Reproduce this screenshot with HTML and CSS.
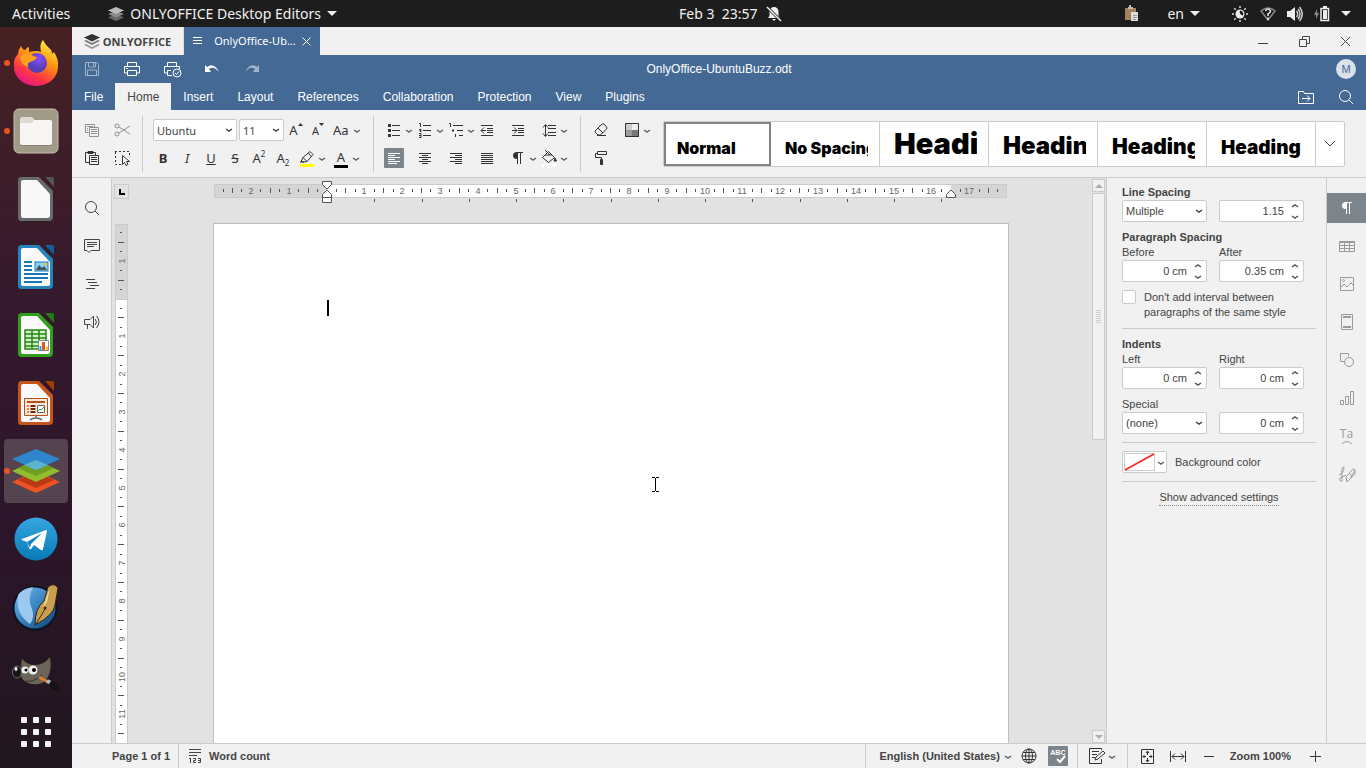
FILE: index.html
```html
<!DOCTYPE html>
<html lang="en">
<head>
    <meta charset="UTF-8">
    <title>OnlyOffice-UbuntuBuzz.odt</title>
    <link rel="stylesheet" href="styles.css">
</head>
<body>
    <!-- GNOME TOP BAR -->
    <header class="topbar">
        <div class="topbar-group menus">
            <span>Activities</span>
            <span class="app-menu">
                <svg width="16" height="16" viewBox="0 0 16 16"><path fill="#666" d="M8 8l8 3.500-8 3.500-8-3.500z"/><path fill="#8c8c8c" d="M8 5l8 3-8 3.500-8-3.500z"/><path fill="#bbb" d="M8 1l8 3.500-8 3.500-8-3.500z"/></svg>
                ONLYOFFICE Desktop Editors
                <svg width="10" height="6"><path fill="#eee" d="M0 0h10l-5 5z"/></svg>
            </span>
        </div>
        <div class="topbar-group clock">
            <span>Feb 3&nbsp; 23:57</span>
            <svg width="16" height="16" viewBox="0 0 16 16"><path fill="#eee" d="M8 1a4.500 4.500 0 0 0-4.500 4.500V10L2 12h12l-1.500-2V5.500A4.500 4.500 0 0 0 8 1zM6 13h4l-2 2z"/><path stroke="#1d1d1d" stroke-width="3" d="M1 1l14 14"/><path stroke="#eee" stroke-width="1.500" d="M1 1l14 14"/></svg>
        </div>
        <div class="topbar-group tray">
            <svg width="16" height="18" viewBox="0 0 16 18"><path fill="#a5815a" d="M1 3h11v12H1z"/><path fill="#bbb" d="M4 2h1V0h2v2h2v2H4z"/><path fill="#ddd" d="M7 7h7v9H7z"/><path stroke="#999" d="M9 10.500h4M9 12.500h4M9 14.500h3"/></svg>
            <span class="lang">en <svg width="10" height="6"><path fill="#eee" d="M0 0h10l-5 5z"/></svg></span>
            <svg width="18" height="18" viewBox="0 0 18 18"><circle cx="9" cy="9" r="4.500" fill="#eee"/><path fill="#1d1d1d" d="M9 5.500a3.500 3.500 0 0 1 3 5A3.500 3.500 0 0 1 9 5.500z"/><path stroke="#ddd" stroke-width="1.500" d="M9 1v2M9 15v2M1 9h2M15 9h2M3.300 3.300l1.400 1.400M13.300 13.300l1.400 1.400M3.300 14.700l1.400-1.400M13.300 4.700l1.400-1.400"/></svg>
            <svg width="16" height="16" viewBox="0 0 16 16"><path fill="none" stroke="#888" stroke-width="1.500" d="M8 14L1 5Q8-1 15 5z"/><path fill="none" stroke="#eee" stroke-width="1.500" d="M5.500 5Q6 3 8 3t2.500 2Q10.500 6.500 8 8v2M8 11.500V14"/></svg>
            <svg width="16" height="16" viewBox="0 0 16 16"><path fill="#eee" d="M0 5h3l5-4v14l-5-4H0z"/><path fill="none" stroke="#ccc" stroke-width="1.500" d="M9.500 5q2.500 3 0 6M11 3q4 5 0 10M12.500 1q5.500 7 0 14"/></svg>
            <svg width="16" height="18" viewBox="0 0 16 18"><path fill="#888" d="M3 4L0 10h2v4l3-6H3z"/><path fill="none" stroke="#eee" stroke-width="1.500" d="M7 3.500h7.500v12H7z"/><path fill="#eee" d="M9 1h4v2H9zM9 5h4v9H9z"/></svg>
            <svg width="10" height="6"><path fill="#eee" d="M0 0h10l-5 5z"/></svg>
        </div>
    </header>

    <div class="desktop">
        <!-- DOCK -->
        <nav class="dock">
            <button class="dock-item running" aria-label="Firefox">
                <svg width="46" height="46" viewBox="0 0 46 46">
                    <defs>
                        <linearGradient id="fx" x1=".8" y1="0" x2=".3" y2="1"><stop offset="0" stop-color="#fff44f"/><stop offset=".4" stop-color="#ff980e"/><stop offset=".75" stop-color="#ff3647"/><stop offset="1" stop-color="#e31587"/></linearGradient>
                        <radialGradient id="fxp" cx=".6" cy=".3"><stop offset="0" stop-color="#8a4dff"/><stop offset="1" stop-color="#5540b8"/></radialGradient>
                    </defs>
                    <path fill="url(#fx)" d="M30 0q3 6 7 9 2 1 2 5l2-2q5 8 4 15A22 19 0 0 1 1 27Q0 19 5 14q0-4 3-8 2 4 4 4 2-3 4-3v5q8-2 12 0-2-8 2-12z"/>
                    <circle cx="24" cy="23" r="10" fill="url(#fxp)"/>
                    <path fill="#ffa01c" d="M7 17q5-4 9-4 3 3 8 4-2 4-7 5-3 1-2 5-7-2-8-10z"/>
                </svg>
            </button>
            <button class="dock-item running" aria-label="Files">
                <svg width="46" height="46" viewBox="0 0 46 46"><rect x="1" y="1" width="44" height="44" rx="5" fill="#a19a88" stroke="#c5bfb0"/><rect x="7" y="12" width="32" height="25" rx="2" fill="#f7f6f5"/><path fill="#dedad2" d="M7 15V11q0-2 2-2h9q2 0 3 2v1l-2 3z"/><path stroke="#888171" d="M8 37.500h30"/></svg>
            </button>
            <button class="dock-item" aria-label="LibreOffice">
                <svg width="38" height="46" viewBox="0 0 38 46"><path fill="#666a68" d="M4 1h18l14 14v26q0 4-4 4H4q-3 0-3-4V5q0-4 3-4z"/><path fill="#f8f8f8" d="M6 4h14l13 14v22q0 2-2 2H6q-2 0-2-2V6q0-2 2-2z"/><path fill="#555" d="M28 1h7q2 0 2 2v8z"/></svg>
            </button>
            <button class="dock-item" aria-label="LibreOffice Writer">
                <svg width="38" height="46" viewBox="0 0 38 46"><path fill="#2583bd" d="M4 1h18l14 14v26q0 4-4 4H4q-3 0-3-4V5q0-4 3-4z"/><path fill="#fafafa" d="M6 4h14l13 14v22q0 2-2 2H6q-2 0-2-2V6q0-2 2-2z"/><path fill="#0d6299" d="M28 1h7q2 0 2 2v8z"/><path stroke="#1a78b5" stroke-width="2" d="M7 18h8M7 22h8M7 26h8M7 30h24M7 34h24M7 38h18"/><rect x="18" y="18" width="13" height="9" fill="#8ad0f3" stroke="#1a78b5"/><path fill="#475152" d="M19 26l3-5 3 3 2-2 3 4z"/><path fill="#f7c71f" d="M27 19h3v2h-3z"/></svg>
            </button>
            <button class="dock-item" aria-label="LibreOffice Calc">
                <svg width="38" height="46" viewBox="0 0 38 46"><path fill="#319e1d" d="M4 1h18l14 14v26q0 4-4 4H4q-3 0-3-4V5q0-4 3-4z"/><path fill="#fafafa" d="M6 4h14l13 14v22q0 2-2 2H6q-2 0-2-2V6q0-2 2-2z"/><path fill="#237a12" d="M28 1h7q2 0 2 2v8z"/><path fill="#d5f1cc" stroke="#238713" stroke-width="1.500" d="M8 18h21v19H8zM8 22h21M8 26h21M8 30h21M8 34h21M15 18v19M22 18v19"/><path fill="#fff" stroke="#888" d="M21.500 28.500h10v10h-10z"/><path stroke="#38a1dc" stroke-width="2" d="M23.500 38v-4"/><path stroke="#e35b17" stroke-width="3" d="M26.500 38v-8"/><path stroke="#f3bd22" stroke-width="2" d="M30 38v-3"/></svg>
            </button>
            <button class="dock-item" aria-label="LibreOffice Impress">
                <svg width="38" height="46" viewBox="0 0 38 46"><path fill="#c75419" d="M4 1h18l14 14v26q0 4-4 4H4q-3 0-3-4V5q0-4 3-4z"/><path fill="#fafafa" d="M6 4h14l13 14v22q0 2-2 2H6q-2 0-2-2V6q0-2 2-2z"/><path fill="#a33e03" d="M28 1h7q2 0 2 2v8z"/><path fill="#fae9dc" stroke="#bc4d13" d="M7.500 18.500h23v17h-23z"/><path stroke="#bc4d13" stroke-width="2" d="M10 22h18"/><path stroke="#e98443" stroke-width="2" stroke-dasharray="2 1" d="M11 25v9"/><path stroke="#702b0a" stroke-width="5" stroke-dasharray="2 1" d="M16 25v9"/><path fill="#fff" stroke="#666" d="M20.500 25.500h7v7h-7z"/><path fill="none" stroke="#23a335" d="M21 31l2-2 1 1 3-3"/><path fill="none" stroke="#666" stroke-width="1.500" d="M19 36v2M13 40q2-2 6-2t6 2"/></svg>
            </button>
            <button class="dock-item running active" aria-label="ONLYOFFICE">
                <svg width="48" height="46" viewBox="0 0 48 46"><path fill="#ed5323" d="M24 23l24 11-24 11L0 34z"/><path fill="#ba3916" d="M24 24l18 8-18 8-18-8z"/><path fill="#91bd2e" d="M24 12l24 11-24 11L0 23z"/><path fill="#6f9d20" d="M24 12l18 8-18 8-18-8z"/><path fill="#2f86cc" d="M24 1l24 10-24 11L0 11z"/><path fill="#5eb3d0" d="M24 12l12 5-12 5-12-5z"/></svg>
            </button>
            <button class="dock-item" aria-label="Telegram">
                <svg width="44" height="44" viewBox="0 0 44 44"><defs><linearGradient id="tg" x2="0" y2="1"><stop stop-color="#35a6df"/><stop offset="1" stop-color="#087bb7"/></linearGradient></defs><circle cx="22" cy="22" r="21.500" fill="url(#tg)"/><path fill="#fff" d="M8 22l24-9q1 0 1 1l-4 18q0 2-2 1l-7-5-3 4q-1 1-2-1l-2-6-5-2q-1 0 0-1z"/><path fill="#1584bf" d="M13 25l15-9-11 11-1 4z"/></svg>
            </button>
            <button class="dock-item" aria-label="Scribus">
                <svg width="48" height="48" viewBox="0 0 48 48"><defs><linearGradient id="sc" x2="1" y2="1"><stop stop-color="#76bdf0"/><stop offset=".5" stop-color="#3982c1"/><stop offset="1" stop-color="#073d70"/></linearGradient></defs><circle cx="23" cy="25" r="21.500" fill="url(#sc)" stroke="#0c1220" stroke-width="2"/><path fill="#9cc9ef" d="M6 12q5-7 15-8-6 12-1 22 3 9-2 15Q3 31 6 12z"/><path fill="#c89f50" stroke="#2f2310" d="M23 42q0-17 9-24l4-14q6-5 10 1l-3 17q-1 10-20 20z"/><path fill="#efd58e" d="M38 5l-3 14-4 6q2-9 7-20z"/><path stroke="#382914" d="M24 41l9-15"/><circle cx="33" cy="25" r="1.500" fill="#382914"/></svg>
            </button>
            <button class="dock-item" aria-label="GIMP">
                <svg width="48" height="44" viewBox="0 0 48 44"><path fill="#6b6559" d="M10 6q5 6 13 6 9 0 15-8 2 12-2 20-5 9-17 7Q8 28 9 20 9 11 10 6z"/><ellipse cx="5" cy="19" rx="4.500" ry="6" fill="#151515" stroke="#6b7274"/><ellipse cx="4" cy="16" rx="1.500" ry="2" fill="#eee"/><circle cx="13" cy="17" r="3.500" fill="#eee"/><circle cx="21" cy="17" r="4.500" fill="#eee"/><circle cx="14" cy="17" r="1.500"/><circle cx="22" cy="17" r="2"/><path fill="none" stroke="#33302c" d="M13 28q8 2 17-6"/><path stroke="#d98030" stroke-width="3" d="M27 24l9 5"/><path stroke="#b0b8bc" stroke-width="4" d="M35 28l4 2"/><path fill="#141414" d="M39 28q7 1 8 10-8 0-10-7z"/></svg>
            </button>
            <button class="dock-item apps" aria-label="Show Applications">
                <svg width="30" height="30" viewBox="0 0 30 30"><g fill="#f2f2f2"><rect width="6" height="6" rx="1"/><rect x="12" width="6" height="6" rx="1"/><rect x="24" width="6" height="6" rx="1"/><rect y="12" width="6" height="6" rx="1"/><rect x="12" y="12" width="6" height="6" rx="1"/><rect x="24" y="12" width="6" height="6" rx="1"/><rect y="24" width="6" height="6" rx="1"/><rect x="12" y="24" width="6" height="6" rx="1"/><rect x="24" y="24" width="6" height="6" rx="1"/></g></svg>
            </button>
        </nav>

        <main class="app">
            <!-- WINDOW TABS -->
            <div class="window-bar">
                <button class="home-tab">
                    <svg width="16" height="15" viewBox="0 0 16 15"><path fill="#333" d="M8 0l8 3.500L8 7.500 0 3.500z"/><path fill="#777" d="M0 7l2-1 6 3 6-3 2 1-8 4z"/><path fill="#999" d="M0 11l2-1 6 3 6-3 2 1-8 4z"/></svg>
                    ONLYOFFICE
                </button>
                <button class="doc-tab">
                    <svg width="10" height="8"><path stroke="#fff" d="M0 .5h9M0 3.500h9M0 6.500h9"/></svg>
                    <span>OnlyOffice-Ub...</span>
                    <svg width="9" height="9"><path stroke="#fff" d="M.5.5l8 8M8.500.5l-8 8"/></svg>
                </button>
                <div class="window-controls">
                    <button aria-label="Minimize"><svg class="ico" width="11" height="11"><path d="M0 7.500h10"/></svg></button>
                    <button aria-label="Restore"><svg class="ico" width="11" height="11"><path d="M.5 3.500h7v7h-7zM3.500 3V.5h7v7H8"/></svg></button>
                    <button aria-label="Close"><svg class="ico" width="11" height="11"><path d="M1 1l9 9M10 1l-9 9"/></svg></button>
                </div>
            </div>

            <div class="title-bar">
                <div class="quick-access">
                    <button class="faded" aria-label="Save"><svg class="ico" width="20" height="20"><path d="M3.500 3.500h11l2 2v11h-13zM6.500 4v4h7V4M5.500 16v-5h9v5M11.500 4v3"/></svg></button>
                    <button aria-label="Print"><svg class="ico" width="20" height="20"><path d="M5.500 7V3.500h9V7M5.500 14h-3V7.500h15V14h-3M5.500 11.500h9v5h-9zM4 9.500h2"/></svg></button>
                    <button aria-label="Quick print"><svg class="ico" width="20" height="20"><path d="M5.500 7V3.500h9V7M5.500 14h-3V7.500h15V10M9 11.500H5.500v5H10"/><circle cx="15" cy="14" r="4"/><path d="M13 14l1.500 1.500L17 12.500"/></svg></button>
                    <button aria-label="Undo"><svg class="ico" width="20" height="20"><path fill="currentColor" stroke="none" d="M3 6l2 2q7-5 12 5l-2-2q-4-4-8-1l2 3H3z"/></svg></button>
                    <button class="faded" aria-label="Redo"><svg class="ico" width="20" height="20"><path fill="currentColor" stroke="none" d="M17 6l-2 2Q8 3 3 13l2-2q4-4 8-1l-2 3h6z"/></svg></button>
                </div>
                <span class="doc-title">OnlyOffice-UbuntuBuzz.odt</span>
                <span class="avatar">M</span>
            </div>

            <nav class="ribbon-tabs">
                <button>File</button>
                <button class="selected">Home</button>
                <button>Insert</button>
                <button>Layout</button>
                <button>References</button>
                <button>Collaboration</button>
                <button>Protection</button>
                <button>View</button>
                <button>Plugins</button>
                <div class="ribbon-right">
                    <button aria-label="Open file location"><svg class="ico" width="20" height="20"><path d="M2.500 16.500v-12h5l1 2h9v10zM6 11.500h8M11 8.500l3 3-3 3"/></svg></button>
                    <button aria-label="Search"><svg class="ico" width="20" height="20"><circle cx="9" cy="9" r="5.500"/><path d="M13 13l4 4"/></svg></button>
                </div>
            </nav>

            <!-- HOME TOOLBAR -->
            <div class="toolbar">
                <div class="tool-group clipboard">
                    <div class="tool-row">
                        <button class="tool faded" aria-label="Copy"><svg class="ico" width="20" height="20"><path d="M6.500 12.500h-3v-8h9v3M5 6.500h6M5 8.500h1M5 10.500h1M7.500 7.500h9v9h-9zM9 9.500h6M9 11.500h6M9 13.500h6"/></svg></button>
                        <button class="tool faded" aria-label="Cut"><svg class="ico" width="20" height="20"><circle cx="5" cy="6" r="2"/><circle cx="5" cy="14" r="2"/><path d="M7 7l11 7M7 13l11-7"/></svg></button>
                    </div>
                    <div class="tool-row">
                        <button class="tool" aria-label="Paste"><svg class="ico" width="20" height="20"><path d="M7 14.500H3.500v-10h10V7M7.500 7.500h9v9h-9zM9 9.500h6M9 11.500h6M9 13.500h6"/><path fill="currentColor" d="M6 3.500h5v2H6z"/></svg></button>
                        <button class="tool" aria-label="Select all"><svg class="ico" width="20" height="20"><path stroke-dasharray="2 2" d="M3 3.500h14.500V9M3.500 4v12.500H11"/><path fill="#fff" d="M10.500 7.500v9l2-2 1.500 3 2-1-1.500-3h3z"/></svg></button>
                    </div>
                </div>
                <div class="tool-group font">
                    <div class="tool-row combos">
                        <select class="field font-name" aria-label="Font"><option>Ubuntu</option></select>
                        <select class="field font-size" aria-label="Font size"><option>11</option></select>
                        <button class="tool letter" aria-label="Increment font size">A<svg class="mark" width="5" height="4"><path fill="#333" d="M0 3h5L2.500 0z"/></svg></button>
                        <button class="tool letter small" aria-label="Decrement font size">A<svg class="mark" width="5" height="4"><path fill="#333" d="M0 0h5L2.500 3z"/></svg></button>
                        <button class="tool letter split" aria-label="Change case">Aa<svg class="caret"><use href="#caret"/></svg></button>
                    </div>
                    <div class="tool-row">
                        <button class="tool letter"><b>B</b></button>
                        <button class="tool letter"><i>I</i></button>
                        <button class="tool letter"><u>U</u></button>
                        <button class="tool letter"><s>S</s></button>
                        <button class="tool letter" aria-label="Superscript">A<sup>2</sup></button>
                        <button class="tool letter" aria-label="Subscript">A<sub>2</sub></button>
                        <button class="tool split" aria-label="Highlight color"><svg class="ico" width="20" height="20"><path stroke="none" fill="#ff0" d="M3 16h14v3H3z"/><path d="M4 13.500l2-4 7-6 3 3-6 7-3 .5zM6 9.500l4 4M11 5l3.500 3.500M3 14h4"/></svg><svg class="caret"><use href="#caret"/></svg></button>
                        <button class="tool split letter fontcolor" aria-label="Font color"><span>A</span><svg class="caret"><use href="#caret"/></svg></button>
                    </div>
                </div>
                <div class="tool-group grid-tools">
                    <div class="tool-row">
                        <button class="tool split" aria-label="Bullets"><svg class="ico" width="20" height="20"><path d="M8 5.500h8M8 10.500h8M8 15.500h8"/><path stroke-width="3" d="M4 5.500h3M4 10.500h3M4 15.500h3"/></svg><svg class="caret"><use href="#caret"/></svg></button>
                        <button class="tool split" aria-label="Numbering"><svg class="ico" width="20" height="20"><path d="M8 5.500h8M8 10.500h8M8 15.500h8M4 3.500h1.500V7M4 9.500h2v1h-1v1h1.500M4 13.500h2v4h-2M4 15.500h2"/></svg><svg class="caret"><use href="#caret"/></svg></button>
                        <button class="tool split" aria-label="Multilevel list"><svg class="ico" width="20" height="20"><path d="M7 5.500h10M11 10.500h6M13 15.500h4M3 3.500h1.500V7M9.500 14v3"/><path stroke-width="2" d="M6 10.500h2"/></svg><svg class="caret"><use href="#caret"/></svg></button>
                        <button class="tool" aria-label="Decrease indent"><svg class="ico" width="20" height="20"><path d="M4 5.500h12M10 8.500h6M10 10.500h6M10 12.500h6M4 15.500h12M4 10.500h5M7 7.500l-3 3 3 3"/></svg></button>
                        <button class="tool" aria-label="Increase indent"><svg class="ico" width="20" height="20"><path d="M4 5.500h12M10 8.500h6M10 10.500h6M10 12.500h6M4 15.500h12M4 10.500h5M6 7.500l3 3-3 3"/></svg></button>
                        <button class="tool split" aria-label="Line spacing"><svg class="ico" width="20" height="20"><path d="M9 5.500h8M9 8.500h8M9 12.500h8M9 15.500h8M6.500 5v11M4 7.500l2.500-3 2.500 3M4 13.500l2.500 3 2.500-3"/></svg><svg class="caret"><use href="#caret"/></svg></button>
                    </div>
                    <div class="tool-row">
                        <button class="tool pressed" aria-label="Align left"><svg class="ico" width="20" height="20"><path d="M4 5.500h12M4 7.500h7M4 9.500h12M4 11.500h7M4 13.500h12M4 15.500h9"/></svg></button>
                        <button class="tool" aria-label="Align center"><svg class="ico" width="20" height="20"><path d="M4 5.500h12M7 7.500h6M4 9.500h12M7 11.500h6M4 13.500h12M7 15.500h6"/></svg></button>
                        <button class="tool" aria-label="Align right"><svg class="ico" width="20" height="20"><path d="M4 5.500h12M9 7.500h7M4 9.500h12M9 11.500h7M4 13.500h12M9 15.500h7"/></svg></button>
                        <button class="tool" aria-label="Justify"><svg class="ico" width="20" height="20"><path d="M4 5.500h12M4 7.500h12M4 9.500h12M4 11.500h12M4 13.500h12M4 15.500h12"/></svg></button>
                        <button class="tool split" aria-label="Nonprinting characters"><svg class="ico" width="20" height="20"><path fill="currentColor" stroke="none" d="M9 4v7Q5 11 5 7.500T9 4z"/><path d="M8 4.500h7M9.500 4v12M12.500 4v12"/></svg><svg class="caret"><use href="#caret"/></svg></button>
                        <button class="tool split" aria-label="Shading"><svg class="ico" width="20" height="20"><path stroke="none" fill="#fff" d="M3 16h14v3H3z"/><path d="M3.500 9.500l6-6 6 6-6 5zM6 7l7 0M6 2l5 5"/><path fill="currentColor" d="M16 10l1.500 3h-2.500z"/></svg><svg class="caret"><use href="#caret"/></svg></button>
                    </div>
                </div>
                <div class="tool-group grid-tools last">
                    <div class="tool-row">
                        <button class="tool" aria-label="Clear style"><svg class="ico" width="20" height="20"><path d="M4 11l7-7q1-1 3 1l1.500 2q1 1 0 2l-6 6H7l-3-3zM7 8l5 5M6 15.500h9"/></svg></button>
                        <button class="tool split" aria-label="Color scheme"><svg class="ico" width="20" height="20"><path stroke="none" fill="#ccc" d="M3 3h7v7H3z"/><path stroke="none" fill="#eee" d="M10 3h7v7h-7z"/><path stroke="none" fill="#999" d="M3 10h7v7H3z"/><path stroke="none" fill="#777" d="M10 10h7v7h-7z"/><path d="M3.500 3.500h13v13h-13z"/></svg><svg class="caret"><use href="#caret"/></svg></button>
                    </div>
                    <div class="tool-row">
                        <button class="tool" aria-label="Copy style"><svg class="ico" width="20" height="20"><path d="M6.500 3.500h9v3h-9zM6 5.500H4.500v4h6V12"/><path fill="currentColor" d="M9.500 11.500h2v5h-2z"/></svg></button>
                    </div>
                </div>
                <div class="gallery">
                    <button class="style-cell chosen"><span class="label s-text">Normal</span></button>
                    <button class="style-cell"><span class="label s-text">No Spacing</span></button>
                    <button class="style-cell"><span class="label s-h1">Heading</span></button>
                    <button class="style-cell"><span class="label s-h2">Heading</span></button>
                    <button class="style-cell"><span class="label s-h3">Heading</span></button>
                    <button class="style-cell"><span class="label s-h4">Heading</span></button>
                    <button class="gallery-more" aria-label="More styles"><svg class="ico" width="12" height="8"><path d="M1 1l5 5 5-5"/></svg></button>
                </div>
            </div>

            <div class="workspace">
                <!-- LEFT MENU -->
                <nav class="side-menu">
                    <button aria-label="Find"><svg class="ico" width="20" height="20"><circle cx="9" cy="9" r="5.500"/><path d="M13 13l4 4"/></svg></button>
                    <button aria-label="Comments"><svg class="ico" width="20" height="20"><path d="M2.500 3.500h15v11H9l-2 2-2-2H2.500zM5 6.500h10M5 8.500h10M5 10.500h7"/></svg></button>
                    <button aria-label="Headings"><svg class="ico" width="20" height="20"><path d="M4 5.500h9M6 8.500h9M8 11.500h9M4 14.500h9"/></svg></button>
                    <button aria-label="Feedback"><svg class="ico" width="20" height="20"><path d="M11.500 4v12L8 12.500H2.500v-5H8zM5.500 13v4M13 7q3 3 0 6M14.500 4q5 6 0 12"/></svg></button>
                </nav>

                <section class="editor">
                    <button class="tab-stop" aria-label="Tab stop"><svg width="6" height="6"><path fill="#000" d="M0 0h2v4h4v2H0z"/></svg></button>
                    <div class="h-ruler"><svg id="hRuler" width="794" height="28"></svg></div>
                    <div class="v-ruler"><svg id="vRuler" width="13" height="520"></svg></div>
                    <div class="paper-area">
                        <article class="paper"><span class="text-cursor"></span></article>
                        <svg class="ico mouse" width="7" height="16"><path d="M0 .5h3M4 .5h3M3.500 1v13M0 14.500h3M4 14.500h3"/></svg>
                    </div>
                    <div class="scrollbar">
                        <button class="scroll-btn" aria-label="Scroll up"><svg width="8" height="4"><path fill="#adadad" d="M0 4h8L4 0z"/></svg></button>
                        <div class="scroll-thumb"></div>
                        <button class="scroll-btn" aria-label="Scroll down"><svg width="8" height="4"><path fill="#adadad" d="M0 0h8L4 4z"/></svg></button>
                    </div>
                </section>

                <!-- PARAGRAPH SETTINGS -->
                <aside class="settings">
                    <h2 id="lineSpacing">Line Spacing</h2>
                    <div class="pair">
                        <select class="field" aria-labelledby="lineSpacing"><option>Multiple</option></select>
                        <div class="spinner"><input type="text" value="1.15" aria-labelledby="lineSpacing"><svg class="ico" width="8" height="16"><use href="#arrows"/></svg></div>
                    </div>
                    <h2 class="spaced">Paragraph Spacing</h2>
                    <div class="pair">
                        <label for="before">Before</label>
                        <label for="after">After</label>
                        <div class="spinner"><input type="text" id="before" value="0 cm"><svg class="ico" width="8" height="16"><use href="#arrows"/></svg></div>
                        <div class="spinner"><input type="text" id="after" value="0.35 cm"><svg class="ico" width="8" height="16"><use href="#arrows"/></svg></div>
                    </div>
                    <div class="check-row">
                        <input type="checkbox" id="interval">
                        <label for="interval">Don't add interval between paragraphs of the same style</label>
                    </div>
                    <hr>
                    <h2>Indents</h2>
                    <div class="pair">
                        <label for="left">Left</label>
                        <label for="right">Right</label>
                        <div class="spinner"><input type="text" id="left" value="0 cm"><svg class="ico" width="8" height="16"><use href="#arrows"/></svg></div>
                        <div class="spinner"><input type="text" id="right" value="0 cm"><svg class="ico" width="8" height="16"><use href="#arrows"/></svg></div>
                    </div>
                    <div class="pair spaced">
                        <label class="wide" for="special">Special</label>
                        <select class="field" id="special"><option>(none)</option></select>
                        <div class="spinner"><input type="text" value="0 cm" aria-label="Special indent"><svg class="ico" width="8" height="16"><use href="#arrows"/></svg></div>
                    </div>
                    <hr>
                    <div class="color-row">
                        <button class="color-btn" id="bgColor"><svg width="31" height="18"><path fill="#fff" stroke="#ccc" d="M.5.5h30v17H.5z"/><path stroke="#f22" stroke-width="1.500" d="M1 17L30 1"/></svg><svg class="caret"><use href="#caret"/></svg></button>
                        <label for="bgColor">Background color</label>
                    </div>
                    <hr>
                    <div class="advanced"><a href="#">Show advanced settings</a></div>
                </aside>

                <nav class="side-tabs">
                    <button class="current" aria-label="Paragraph"><svg class="ico" width="20" height="20"><path fill="currentColor" stroke="none" d="M9 4v7Q5 11 5 7.500T9 4z"/><path d="M8 4.500h7M9.500 4v12M12.500 4v12"/></svg></button>
                    <button aria-label="Table"><svg class="ico" width="20" height="20"><path d="M2.500 5.500h15v10h-15zM2 9.500h15M2 12.500h15M7.500 5v10M12.500 5v10"/><path stroke-width="2" d="M2 6h16"/></svg></button>
                    <button aria-label="Image"><svg class="ico" width="20" height="20"><path d="M3.500 3.500h13v13h-13zM4 13l3-3 3 3 4-4 2 2"/><circle cx="6.500" cy="6.500" r="1"/></svg></button>
                    <button aria-label="Header and footer"><svg class="ico" width="20" height="20"><path d="M4.500 2.500h11v15h-11z"/><path stroke-width="2" d="M6 5h8M6 15h8"/></svg></button>
                    <button aria-label="Shape"><svg class="ico" width="20" height="20"><path d="M7 11.500H3.500v-8h8V6"/><circle cx="12" cy="12" r="4.500"/></svg></button>
                    <button aria-label="Chart"><svg class="ico" width="20" height="20"><path d="M3.500 12.500h3v4h-3zM8.500 8.500h3v8h-3zM13.500 3.500h3v13h-3z"/></svg></button>
                    <button class="text-art" aria-label="Text Art">Ta<svg class="ico" width="12" height="5"><path d="M1 4q5-5 10 0"/></svg></button>
                    <button aria-label="Signature"><svg class="ico" width="20" height="20"><path d="M2 11q5-2 5-8Q4 3 5 9v8q-4 0-2-3l6-3M9 13l7-8 2 1-5 9-3 3zM12 9l3 3M14 14l4-4V6"/></svg></button>
                </nav>
            </div>

            <footer class="status-bar">
                <button class="page-num">Page 1 of 1</button>
                <button class="word-count">
                    <svg class="ico" width="16" height="16"><path d="M2 1.500h12M2 4.500h12M2 7.500h8M3.500 10v5M2 10.500h1.500M6 10.500h2.500v2H6.500v2H9M11 10.500h2.500v4H11M11 12.500h2"/></svg>
                    Word count
                </button>
                <div class="status-right">
                    <div class="status-group">
                        <button>English (United States) <svg class="caret"><use href="#caret"/></svg></button>
                        <button class="tool" aria-label="Document language"><svg class="ico" width="20" height="20"><circle cx="10" cy="10" r="7"/><ellipse cx="10" cy="10" rx="3.500" ry="7"/><path d="M10 3v14M3 10h14M4 6.500h12M4 13.500h12"/></svg></button>
                        <button class="tool pressed spell" aria-label="Spell checking"><span>ABC</span><svg class="ico" width="20" height="20"><path stroke-width="2" d="M9 13l3 3 5-6"/></svg></button>
                    </div>
                    <div class="status-group">
                        <button class="tool split" aria-label="Track changes"><svg class="ico" width="20" height="20"><path d="M14.500 13v4.500h-12v-15h12V4M5 5.500h7M5 8.500h5M5 11.500h3"/><path d="M8 14l1-3 7-6 2 2-7 6z"/></svg><svg class="caret"><use href="#caret"/></svg></button>
                    </div>
                    <div class="status-group zoom">
                        <button class="tool" aria-label="Fit to page"><svg class="ico" width="20" height="20"><path d="M4.500 3.500h12v14h-12zM10.500 5v4M10.500 12v4M6 10.500h3M12 10.500h3M9 7l1.500-2L12 7M9 14l1.500 2 1.500-2M7.500 9L6 10.500 7.500 12M13.500 9l1.500 1.500-1.500 1.500"/></svg></button>
                        <button class="tool" aria-label="Fit to width"><svg class="ico" width="20" height="20"><path d="M2.500 5v11M17.500 5v11M4 10.500h12M7 7.500l-3 3 3 3M13 7.500l3 3-3 3"/></svg></button>
                        <button class="tool" aria-label="Zoom out"><svg class="ico" width="20" height="20"><path d="M5 10.500h10"/></svg></button>
                        <span>Zoom 100%</span>
                        <button class="tool" aria-label="Zoom in"><svg class="ico" width="20" height="20"><path d="M5 10.500h11M10.500 5v11"/></svg></button>
                    </div>
                </div>
            </footer>
        </main>
    </div>

    <!-- shared shapes -->
    <svg class="shapes" width="0" height="0">
        <symbol id="caret" viewBox="0 0 8 8"><path fill="none" stroke="#666" stroke-width="1.500" d="M1 4l3 2 3-2"/></symbol>
        <symbol id="arrows" viewBox="0 0 8 16"><path fill="none" stroke="#555" stroke-width="1.500" d="M1 4l3-2 3 2M1 13l3 2 3-2"/></symbol>
    </svg>

    <script src="rulers.js"></script>
</body>
</html>
```

FILE: styles.css
```css
:root {
    --blue: #446995;
    --panel: #f1f1f1;
    --line: #cbcbcb;
    --text: #444;
    --pressed: #7d858c;
}

* {
    box-sizing: border-box;
    margin: 0;
    padding: 0;
}

body {
    font-family: "Liberation Sans", Arial, sans-serif;
    font-size: 11px;
    color: var(--text);
    height: 100vh;
    display: flex;
    flex-direction: column;
    overflow: hidden;
}

button {
    font: inherit;
    color: inherit;
    border: none;
    background: none;
    display: flex;
    align-items: center;
    justify-content: center;
}

svg {
    flex: none;
}

.ico {
    fill: none;
    stroke: currentColor;
}

.caret {
    width: 8px;
    height: 8px;
}

.shapes {
    position: absolute;
}

.faded {
    opacity: 0.5;
}

/* top bar */
.topbar {
    height: 27px;
    flex: none;
    padding: 0 15px 0 12px;
    background: #1d1d1d;
    color: #f2f2f2;
    font-family: "Noto Sans", sans-serif;
    font-size: 14px;
    display: flex;
    align-items: center;
    justify-content: space-between;
}

.topbar-group,
.app-menu,
.lang {
    display: flex;
    align-items: center;
}

.menus {
    gap: 38px;
}

.app-menu,
.lang {
    gap: 6px;
}

.clock {
    gap: 9px;
}

.tray {
    gap: 11px;
}

.tray .lang {
    margin: 0 20px 0 16px;
}

.desktop {
    flex: 1;
    min-height: 0;
    display: flex;
}

/* dock */
.dock {
    width: 72px;
    flex: none;
    padding: 4px;
    background: linear-gradient(#472123, #351a2d 35%, #2d152b 65%, #21171e);
    display: flex;
    flex-direction: column;
    gap: 4px;
}

.dock-item {
    flex: none;
    height: 64px;
    border-radius: 4px;
    position: relative;
}

.dock-item.active {
    background: #554350;
}

.dock-item.running::before {
    content: "";
    position: absolute;
    left: 0;
    width: 6px;
    height: 6px;
    border-radius: 50%;
    background: #e95420;
}

.dock-item.apps {
    height: 42px;
}

/* window */
.app {
    flex: 1;
    min-width: 0;
    display: flex;
    flex-direction: column;
    background: var(--panel);
}

.window-bar {
    height: 28px;
    flex: none;
    display: flex;
}

.home-tab {
    width: 112px;
    gap: 3px;
    border-right: 1px solid #ddd;
    font-family: "Open Sans", sans-serif;
    font-size: 11px;
    font-weight: 700;
}

.doc-tab {
    width: 136px;
    gap: 6px;
    background: var(--blue);
    color: #fff;
    font-family: "Noto Sans", sans-serif;
    font-size: 11px;
}

.doc-tab span {
    margin: 0 0 2px 5px;
}

.window-controls {
    margin-left: auto;
    display: flex;
}

.window-controls button {
    width: 41px;
}

.title-bar {
    height: 28px;
    flex: none;
    background: var(--blue);
    color: #fff;
    font-size: 12px;
    display: grid;
    grid-template-columns: 1fr auto 1fr;
    align-items: center;
}

.quick-access {
    display: flex;
}

.quick-access button {
    width: 40px;
}

.avatar {
    width: 20px;
    height: 20px;
    margin-right: 10px;
    justify-self: end;
    border-radius: 50%;
    background: #dae1ea;
    color: var(--blue);
    font-size: 11px;
    line-height: 20px;
    text-align: center;
}

.ribbon-tabs {
    height: 27px;
    flex: none;
    background: var(--blue);
    color: #fff;
    font-size: 12px;
    display: flex;
}

.ribbon-tabs button {
    padding: 0 12px;
}

.ribbon-tabs .selected {
    background: var(--panel);
    color: var(--text);
}

.ribbon-right {
    margin-left: auto;
    display: flex;
}

.ribbon-right button {
    padding: 0 10px;
}

/* toolbar */
.toolbar {
    height: 68px;
    flex: none;
    padding: 6px 21px 5px 0;
    border-bottom: 1px solid var(--line);
    display: flex;
}

.tool-group {
    padding: 0 10px;
    position: relative;
}

.tool-group:not(.last) {
    border-right: 1px solid var(--line);
}

.tool-row {
    height: 28px;
    display: flex;
    align-items: center;
    gap: 4px;
}

.clipboard .tool-row {
    gap: 10px;
}

.combos {
    gap: 2px;
}

.grid-tools {
    padding-right: 11px;
}

.grid-tools .tool-row {
    display: grid;
    grid-template-columns: repeat(6, 30px);
    gap: 1px;
}

.grid-tools.last .tool-row {
    grid-template-columns: repeat(2, 30px);
}

.tool {
    width: 20px;
    height: 20px;
    color: #333;
}

.tool.split {
    width: 30px;
    justify-content: flex-start;
    gap: 1px;
}

.tool.pressed {
    background: var(--pressed);
    color: #fff;
    border-radius: 1px;
}

.letter {
    font-family: "Noto Sans", sans-serif;
    font-size: 13px;
}

.letter.small {
    font-size: 11px;
}

.combos .letter.split {
    margin-left: 3px;
    gap: 4px;
}

.letter .mark {
    align-self: flex-start;
    margin-top: 3px;
}

.letter sup,
.letter sub {
    font-size: 8px;
    line-height: 8px;
}

.letter sup {
    align-self: flex-start;
    margin-top: 2px;
}

.letter sub {
    align-self: flex-end;
    margin-bottom: 1px;
}

.fontcolor span {
    width: 14px;
    margin: 0 3px;
    line-height: 16px;
    border-bottom: 3px solid #000;
}

.field {
    appearance: none;
    height: 22px;
    padding: 0 3px;
    border: 1px solid var(--line);
    border-radius: 2px;
    color: var(--text);
    font: inherit;
    background: #fff url("data:image/svg+xml,%3Csvg xmlns='http://www.w3.org/2000/svg' width='8' height='6'%3E%3Cpath d='M1 2l3 2 3-2' fill='none' stroke='%23444' stroke-width='1.500'/%3E%3C/svg%3E") no-repeat right 3px center;
}

.font-name {
    width: 84px;
    font-family: "Noto Sans", sans-serif;
}

.font-size {
    width: 45px;
    font-family: "Noto Sans", sans-serif;
}

.gallery {
    flex: 1;
    min-width: 0;
    height: 46px;
    margin-top: 5px;
    border: 1px solid var(--line);
    border-radius: 2px;
    background: #fff;
    display: flex;
}

.style-cell {
    flex: 1;
    min-width: 0;
    padding: 0 11px 0 14px;
    border-right: 1px solid var(--line);
    color: #000;
    font-family: Inter, sans-serif;
    font-weight: 900;
    font-size: 29px;
    line-height: 44px;
    display: block;
    text-align: left;
}

.style-cell.chosen {
    padding: 0 9px 0 11px;
    border: 2px solid #848484;
    line-height: 40px;
}

.label {
    display: block;
    overflow: hidden;
    white-space: nowrap;
}

.s-text {
    font-size: 16px;
    padding-top: 4px;
}

.s-h2 {
    font-size: 24px;
    padding-top: 2px;
}

.s-h3 {
    font-size: 21px;
    padding-top: 3px;
}

.s-h4 {
    font-size: 19px;
    padding-top: 4px;
}

.gallery-more {
    width: 28px;
}

/* workspace */
.workspace {
    flex: 1;
    min-height: 0;
    display: flex;
}

.side-menu {
    width: 40px;
    padding-top: 20px;
    border-right: 1px solid var(--line);
    display: flex;
    flex-direction: column;
    align-items: center;
    gap: 18px;
}

.side-menu button {
    height: 20px;
}

.editor {
    flex: 1;
    min-width: 0;
    background: #e2e2e2;
    overflow: hidden;
    display: grid;
    grid-template-columns: 18px 1fr 14px;
    grid-template-rows: 45px 1fr;
}

.tab-stop {
    width: 15px;
    height: 15px;
    margin: 6px 0 0 2px;
    border: 1px solid var(--line);
}

.h-ruler {
    display: flex;
    justify-content: center;
}

.v-ruler {
    grid-row: 2;
    padding-left: 3px;
    overflow: hidden;
}

.v-ruler svg {
    display: block;
}

.paper-area {
    grid-row: 2;
    grid-column: 2;
    position: relative;
    display: flex;
    justify-content: center;
    overflow: hidden;
}

.paper {
    width: 796px;
    padding: 76px 113px;
    border: 1px solid #bbbec2;
    border-bottom: none;
    background: #fff;
}

.text-cursor {
    display: block;
    width: 2px;
    height: 16px;
    background: #000;
}

.mouse {
    position: absolute;
    left: 522px;
    top: 254px;
    color: #000;
}

.scrollbar {
    grid-row: 1 / 3;
    grid-column: 3;
    padding: 1px 0 0;
    display: flex;
    flex-direction: column;
    gap: 1px;
}

.scroll-btn,
.scroll-thumb {
    width: 13px;
    height: 13px;
    border: 1px solid var(--line);
    background: var(--panel);
}

.scroll-btn:last-child {
    margin-top: auto;
}

.scroll-thumb {
    height: 247px;
    display: flex;
    align-items: center;
    justify-content: center;
}

.scroll-thumb::before {
    content: "";
    width: 5px;
    height: 13px;
    background: repeating-linear-gradient(#cfcfcf 0 1px, var(--panel) 1px 2px);
}

/* paragraph settings */
.settings {
    width: 220px;
    padding: 7px 10px 0 15px;
    border-left: 1px solid var(--line);
    line-height: 15px;
}

.settings h2 {
    font-size: 11px;
}

.settings .spaced {
    margin-top: 8px;
}

.pair {
    display: grid;
    grid-template-columns: 85px 85px;
    column-gap: 12px;
}

.pair .wide {
    grid-column: 1 / 3;
}

.spinner {
    height: 22px;
    padding-right: 4px;
    border: 1px solid var(--line);
    border-radius: 2px;
    background: #fff;
    display: flex;
    align-items: center;
    gap: 7px;
}

.spinner input {
    flex: 1;
    min-width: 0;
    border: none;
    outline: none;
    background: none;
    color: var(--text);
    font: inherit;
    text-align: right;
}

.check-row {
    margin-top: 8px;
    display: flex;
    gap: 8px;
}

.check-row input {
    appearance: none;
    flex: none;
    width: 14px;
    height: 14px;
    border: 1px solid var(--line);
    border-radius: 2px;
    background: #fff;
}

.settings hr {
    margin: 8px 0;
    border: none;
    border-top: 1px solid var(--line);
}

.color-row {
    display: flex;
    align-items: center;
    gap: 8px;
}

.color-btn {
    width: 45px;
    height: 22px;
    gap: 2px;
    border: 1px solid var(--line);
    border-radius: 2px;
    background: #fff;
}

.advanced {
    text-align: center;
}

.advanced a {
    color: var(--text);
    text-decoration: none;
    border-bottom: 1px dotted #888;
    display: inline-block;
}

.side-tabs {
    width: 40px;
    padding-top: 15px;
    border-left: 1px solid var(--line);
    color: #9b9b9b;
    display: flex;
    flex-direction: column;
    gap: 8px;
}

.side-tabs button {
    height: 30px;
}

.side-tabs .current {
    background: var(--pressed);
    color: #fff;
}

.side-tabs .text-art {
    flex-direction: column;
    font-family: "Open Sans", sans-serif;
    font-size: 12px;
    line-height: 12px;
}

/* status bar */
.status-bar {
    height: 25px;
    flex: none;
    border-top: 1px solid var(--line);
    font-weight: 700;
    display: flex;
}

.page-num {
    padding: 0 8px 0 40px;
    border-right: 1px solid var(--line);
}

.word-count {
    padding-left: 8px;
    gap: 6px;
}

.status-right {
    margin-left: auto;
    display: flex;
}

.status-group {
    padding: 0 10px 0 9px;
    border-left: 1px solid var(--line);
    display: flex;
    align-items: center;
    gap: 9px;
}

.status-group:first-child {
    padding: 0 9px 0 13px;
}

.status-group button:not(.tool) {
    gap: 4px;
    margin-right: -2px;
}

.status-group.zoom {
    padding-right: 41px;
    gap: 11px;
}

.zoom span {
    margin-right: 3px;
}

.spell {
    position: relative;
}

.spell span {
    font-size: 7px;
    line-height: 8px;
    align-self: flex-start;
    margin-top: 3px;
}

.spell svg {
    position: absolute;
    left: 0;
    top: 0;
}
```

FILE: rulers.js
```javascript
const CM = 37.8;
const NS = "http://www.w3.org/2000/svg";

function add(svg, tag, attrs, text) {
    const el = document.createElementNS(NS, tag);
    for (const key in attrs) el.setAttribute(key, attrs[key]);
    if (text !== undefined) el.textContent = text;
    svg.appendChild(el);
}

function drawHorizontal() {
    const svg = document.getElementById("hRuler");
    const zero = 113;
    add(svg, "rect", { x: 0.5, y: 6.5, width: 792, height: 13, fill: "#d5d5d5", stroke: "#cbcbcb" });
    add(svg, "rect", { x: zero, y: 7, width: 624, height: 12, fill: "#fff" });

    for (let q = -11; q <= 71; q++) {
        const x = Math.floor(zero + q * CM / 4);
        if (q === 0 || q === 66) continue;
        if (q % 4 === 0) {
            add(svg, "text", { x: x, y: 16, "font-size": 9, fill: "#666", "text-anchor": "middle" }, Math.abs(q / 4));
        } else {
            const h = q % 2 === 0 ? 5 : 3;
            add(svg, "rect", { x: x, y: h === 5 ? 10 : 11, width: 1, height: h, fill: "#555" });
        }
    }
    // default tab stops, every 1.25 cm
    for (let t = 1; t <= 13; t++) {
        add(svg, "rect", { x: Math.round(zero + t * CM * 1.25), y: 21, width: 1, height: 3, fill: "#555" });
    }
    // indent markers
    const marker = { fill: "#fff", stroke: "#555" };
    add(svg, "path", { d: "M108.500 3.500h9v3l-4.500 4.500-4.500-4.500z", ...marker });
    add(svg, "path", { d: "M108.500 24.500h9v-8l-4.500-4.500-4.500 4.500zM108.500 19.500h9", ...marker });
    add(svg, "path", { d: "M732.500 19.500h9v-3l-4.500-4.500-4.500 4.500z", ...marker });
}

function drawVertical() {
    const svg = document.getElementById("vRuler");
    const zero = 76;
    add(svg, "rect", { x: 0.5, y: 1.5, width: 12, height: 530, fill: "#fff", stroke: "#cbcbcb" });
    add(svg, "rect", { x: 0.5, y: 1.5, width: 12, height: 75, fill: "#d5d5d5", stroke: "#cbcbcb" });

    for (let q = -7; q <= 46; q++) {
        const y = Math.floor(zero + q * CM / 4);
        if (q === 0) continue;
        if (q % 4 === 0) {
            add(svg, "text", { x: 0, y: 0, transform: `translate(10 ${y}) rotate(-90)`, "font-size": 9, fill: "#666", "text-anchor": "middle" }, Math.abs(q / 4));
        } else {
            const w = q % 2 === 0 ? 6 : 2;
            add(svg, "rect", { x: w === 6 ? 3 : 5, y: y, width: w, height: 1, fill: "#555" });
        }
    }
}

drawHorizontal();
drawVertical();
```
